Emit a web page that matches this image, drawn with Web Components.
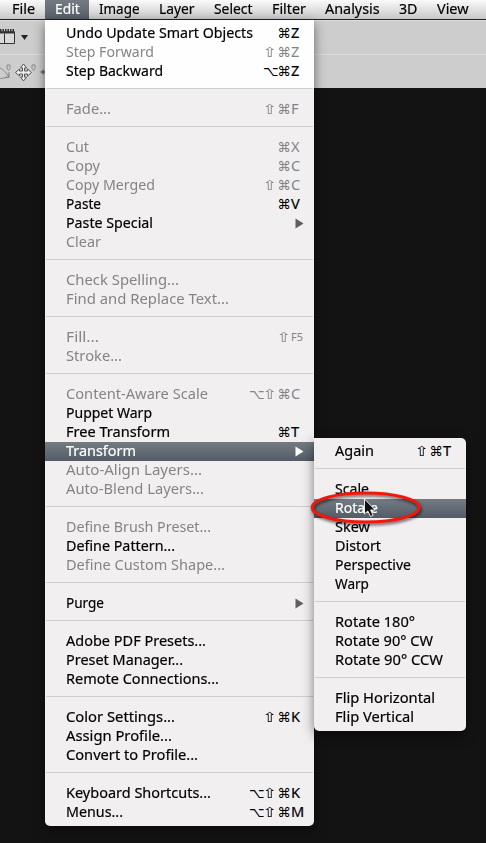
<!DOCTYPE html>
<html lang="en">
<head>
<meta charset="utf-8">
<title>Edit menu</title>
<style>
  html, body {
    margin: 0;
    height: 843px;
    overflow: hidden;
    background: #131313;
    font: 14.6px/19px "Noto Sans", "Open Sans", sans-serif;
    color: #000;
  }
</style>
</head>
<body>
<app-window></app-window>

<script>
/* Text scaled sideways to an exact width */
class FitText extends HTMLElement {
  constructor () {
    super()
    this.attachShadow({ mode: 'open' }).innerHTML = `
      <style>
        :host { display: block; white-space: nowrap; }
        span { display: inline-block; transform-origin: 0 50%; }
      </style>
      <span><slot></slot></span>
    `
  }

  connectedCallback () {
    const width = Number(this.getAttribute('width'))
    const span = this.shadowRoot.querySelector('span')
    this.style.width = `${width}px`
    span.style.transform = `scaleX(${width / span.getBoundingClientRect().width})`
  }
}

class MenuTitle extends HTMLElement {
  constructor () {
    super()
    this.attachShadow({ mode: 'open' }).innerHTML = `
      <style>
        :host {
          display: block;
          flex: none;
          height: 19px;
          padding: 0 9.7px;
          line-height: 16px;
          -webkit-text-stroke: .2px;
        }
        :host([active]) {
          color: #fff;
          background: linear-gradient(#747b82, #565f6a);
        }
      </style>
      <fit-text width="${this.getAttribute('width')}"><slot></slot></fit-text>
    `
  }
}

class MenuBar extends HTMLElement {
  constructor () {
    super()
    this.attachShadow({ mode: 'open' }).innerHTML = `
      <style>
        :host {
          display: flex;
          box-sizing: border-box;
          height: 20px;
          padding-left: 2.8px;
          overflow: hidden;
          background: linear-gradient(#fafafa, #c8c8c8);
          border-bottom: 1px solid #20202a;
        }
      </style>
      <slot></slot>
    `
  }
}

class ToolBar extends HTMLElement {
  constructor () {
    super()
    this.attachShadow({ mode: 'open' }).innerHTML = `
      <style>
        :host { display: block; height: 68px; background: #cdcdcd; }
        div { box-sizing: border-box; height: 34px; border-top: 1px solid #dcdcdc; }
        div:first-child { height: 35px; border-bottom: 1px solid #626262; }
        div:last-child { height: 33px; }
        svg { display: block; }
      </style>
      <div>
        <svg width="46" height="32" viewBox="0 21 46 32">
          <path d="M0 32h14.500v11.500H0M4.500 33.500v10" fill="#dadada" stroke="#333"/>
          <path d="M0 30.500h15" stroke="#333" stroke-width="3" stroke-dasharray="1.500 1"/>
          <path d="M0 32.500h15" stroke="#333" stroke-width="2"/>
          <path d="M21 35h7l-3.500 5z" fill="#222"/>
        </svg>
      </div>
      <div>
        <svg width="46" height="32" viewBox="0 56 46 32" fill="none" stroke="#888">
          <path d="M-1 69c3 0 6 3 10 9M-1 79c4 1 8 0 10-4M9 73v5.500H4"/>
          <path d="M7 66h3v3.500l-1.500 2-1.500-2z"/>
          <path d="M32 66h3v3.500l-1.500 2-1.500-2z"/>
          <path d="M23.500 65l3 4h-2v3h3v-2l4 3.500-4 3.500v-2h-3v3h2l-3 4-3-4h2v-3h-3v2l-4-3.500 4-3.500v2h3v-3h-2z" fill="#eee" stroke="#555"/>
          <path d="M40 73l4-3v2h2v2h-2v2z" fill="#777" stroke="none"/>
        </svg>
      </div>
    `
  }
}

class MenuItem extends HTMLElement {
  constructor () {
    super()
    const keys = [...(this.getAttribute('keys') || '')]
    const mods = keys.filter(key => '⌥⇧⌘'.includes(key))
    const key = keys.slice(mods.length).join('')
    this.attachShadow({ mode: 'open' }).innerHTML = `
      <style>
        :host {
          display: flex;
          align-items: center;
          height: 19px;
          padding-left: 21px;
          line-height: 17px;
          -webkit-text-stroke: .2px;
        }
        :host([disabled]) { color: #858485; -webkit-text-stroke: 0; }
        :host([active]) {
          color: #fff;
          background: linear-gradient(#747b82, #535c67);
        }
        fit-text, .keys { height: 19px; }
        .keys { display: flex; margin-left: auto; }
        .mod {
          width: 14px;
          text-align: center;
          font: 13.5px/18px "DejaVu Sans", sans-serif;
          -webkit-text-stroke: 0;
        }
        .shift { transform: scaleX(1.35); }
        .key { width: 23px; }
        .key.small { font-size: 11px; line-height: 18px; }
        svg { margin: 0 10.5px 0 auto; }
      </style>
      <fit-text width="${this.getAttribute('width')}"><slot></slot></fit-text>
      ${key ? `<div class="keys">${mods.map(mod => `<span class="mod${mod === '⇧' ? ' shift' : ''}">${mod}</span>`).join('')}<span class="key${key.length > 1 ? ' small' : ''}">${key}</span></div>` : ''}
      ${this.hasAttribute('submenu') ? `<svg width="9" height="11"><path d="M.5 .5v10l8-5z" fill="${this.hasAttribute('active') ? '#fff' : '#5e5e5e'}"/></svg>` : ''}
    `
  }
}

class MenuSeparator extends HTMLElement {
  constructor () {
    super()
    this.attachShadow({ mode: 'open' }).innerHTML = `
      <style>
        :host { display: block; height: 19px; padding: 7px 1px 0; box-sizing: border-box; }
        i { display: block; height: 1px; background: #cfcdcf; }
      </style>
      <i></i>
    `
  }
}

class MenuPanel extends HTMLElement {
  constructor () {
    super()
    this.attachShadow({ mode: 'open' }).innerHTML = `
      <style>
        :host {
          display: block;
          box-sizing: border-box;
          padding: 4px 0;
          background: #f2eff1;
          border-radius: 0 0 5px 5px;
          box-shadow: 0 4px 12px rgba(0, 0, 0, .5);
        }
      </style>
      <slot></slot>
    `
  }
}

/* Red ring and mouse pointer over the chosen command */
class PointerMark extends HTMLElement {
  constructor () {
    super()
    this.attachShadow({ mode: 'open' }).innerHTML = `
      <style>
        :host { display: block; width: 116px; height: 40px; }
        svg { display: block; overflow: visible; }
        ellipse { filter: drop-shadow(1px 2px 1.5px rgba(0, 0, 0, .6)); }
      </style>
      <svg width="116" height="40" viewBox="308 488 116 40">
        <ellipse cx="365.7" cy="507.5" rx="53.5" ry="14.5" fill="none" stroke="#f3160a" stroke-width="3"/>
        <path d="M364.5 499v15l3.300-3 2.700 5.500 2.600-1.200-2.500-5.300h4.600z" fill="#111" stroke="#fff" stroke-width=".9"/>
      </svg>
    `
  }
}

class AppWindow extends HTMLElement {
  constructor () {
    super()
    this.attachShadow({ mode: 'open' }).innerHTML = `
      <style>
        :host { display: block; position: relative; width: 486px; height: 843px; overflow: hidden; }
        menu-panel { position: absolute; }
        .edit {
          left: 45px;
          top: 20px;
          width: 269px;
          background: linear-gradient(#fefefe 68px, #f2eff1 69px);
        }
        .transform {
          left: 314px;
          top: 438px;
          width: 152px;
          border-radius: 0 5px 5px 5px;
        }
        pointer-mark { position: absolute; left: 308px; top: 488px; }
      </style>
      <menu-bar>
        <menu-title width="23">File</menu-title>
        <menu-title width="24.7" active>Edit</menu-title>
        <menu-title width="40.5">Image</menu-title>
        <menu-title width="35.5">Layer</menu-title>
        <menu-title width="38.5">Select</menu-title>
        <menu-title width="33.8">Filter</menu-title>
        <menu-title width="54.7">Analysis</menu-title>
        <menu-title width="18.5">3D</menu-title>
        <menu-title width="31.5">View</menu-title>
      </menu-bar>
      <tool-bar></tool-bar>
      <menu-panel class="edit">
        <menu-item width="187" keys="⌘Z">Undo Update Smart Objects</menu-item>
        <menu-item width="88" keys="⇧⌘Z" disabled>Step Forward</menu-item>
        <menu-item width="97" keys="⌥⌘Z">Step Backward</menu-item>
        <menu-separator></menu-separator>
        <menu-item width="45" keys="⇧⌘F" disabled>Fade...</menu-item>
        <menu-separator></menu-separator>
        <menu-item width="23" keys="⌘X" disabled>Cut</menu-item>
        <menu-item width="34" keys="⌘C" disabled>Copy</menu-item>
        <menu-item width="89" keys="⇧⌘C" disabled>Copy Merged</menu-item>
        <menu-item width="35" keys="⌘V">Paste</menu-item>
        <menu-item width="87" submenu>Paste Special</menu-item>
        <menu-item width="35" disabled>Clear</menu-item>
        <menu-separator></menu-separator>
        <menu-item width="113" disabled>Check Spelling...</menu-item>
        <menu-item width="163" disabled>Find and Replace Text...</menu-item>
        <menu-separator></menu-separator>
        <menu-item width="33" keys="⇧F5" disabled>Fill...</menu-item>
        <menu-item width="56" disabled>Stroke...</menu-item>
        <menu-separator></menu-separator>
        <menu-item width="142" keys="⌥⇧⌘C" disabled>Content-Aware Scale</menu-item>
        <menu-item width="86">Puppet Warp</menu-item>
        <menu-item width="104" keys="⌘T">Free Transform</menu-item>
        <menu-item width="70" submenu active>Transform</menu-item>
        <menu-item width="136" disabled>Auto-Align Layers...</menu-item>
        <menu-item width="138" disabled>Auto-Blend Layers...</menu-item>
        <menu-separator></menu-separator>
        <menu-item width="145" disabled>Define Brush Preset...</menu-item>
        <menu-item width="109">Define Pattern...</menu-item>
        <menu-item width="159" disabled>Define Custom Shape...</menu-item>
        <menu-separator></menu-separator>
        <menu-item width="38" submenu>Purge</menu-item>
        <menu-separator></menu-separator>
        <menu-item width="140">Adobe PDF Presets...</menu-item>
        <menu-item width="117">Preset Manager...</menu-item>
        <menu-item width="153">Remote Connections...</menu-item>
        <menu-separator></menu-separator>
        <menu-item width="109" keys="⇧⌘K">Color Settings...</menu-item>
        <menu-item width="106">Assign Profile...</menu-item>
        <menu-item width="132">Convert to Profile...</menu-item>
        <menu-separator></menu-separator>
        <menu-item width="145" keys="⌥⇧⌘K">Keyboard Shortcuts...</menu-item>
        <menu-item width="57" keys="⌥⇧⌘M">Menus...</menu-item>
      </menu-panel>
      <menu-panel class="transform">
        <menu-item width="39" keys="⇧⌘T">Again</menu-item>
        <menu-separator></menu-separator>
        <menu-item width="34">Scale</menu-item>
        <menu-item width="43" active>Rotate</menu-item>
        <menu-item width="35">Skew</menu-item>
        <menu-item width="46">Distort</menu-item>
        <menu-item width="76">Perspective</menu-item>
        <menu-item width="34">Warp</menu-item>
        <menu-separator></menu-separator>
        <menu-item width="80">Rotate 180°</menu-item>
        <menu-item width="98">Rotate 90° CW</menu-item>
        <menu-item width="108">Rotate 90° CCW</menu-item>
        <menu-separator></menu-separator>
        <menu-item width="100">Flip Horizontal</menu-item>
        <menu-item width="79">Flip Vertical</menu-item>
      </menu-panel>
      <pointer-mark></pointer-mark>
    `
  }
}

customElements.define('fit-text', FitText)
customElements.define('menu-title', MenuTitle)
customElements.define('menu-bar', MenuBar)
customElements.define('tool-bar', ToolBar)
customElements.define('menu-item', MenuItem)
customElements.define('menu-separator', MenuSeparator)
customElements.define('menu-panel', MenuPanel)
customElements.define('pointer-mark', PointerMark)
customElements.define('app-window', AppWindow)
</script>
</body>
</html>
